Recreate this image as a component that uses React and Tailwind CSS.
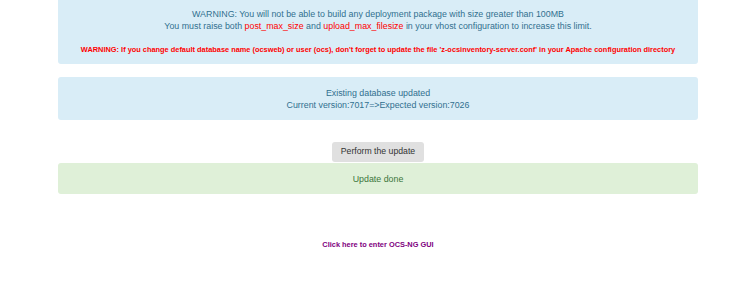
export default function App() {
  return (
    <div className="w-[750px] h-[308px] bg-white overflow-hidden" style={{ fontFamily: '"Liberation Sans", Arial, sans-serif' }}>
      <div className="ml-[58px] w-[640px]">
        <div className="bg-[#d9edf7] text-[#31708f] text-center text-[8.85px] leading-[12px] pt-[8px] pb-[8px] rounded-b-[3px]">
          <div>WARNING: You will not be able to build any deployment package with size greater than 100MB</div>
          <div>
            You must raise both <span className="text-[#ff0000]">post_max_size</span> and{" "}
            <span className="text-[#ff0000]">upload_max_filesize</span> in your vhost configuration to increase this limit.
          </div>
          <div className="h-[12px]"></div>
          <div className="text-[#ff0000] font-bold text-[7.4px] leading-[12px]">
            WARNING: If you change default database name (ocsweb) or user (ocs), don't forget to update the file 'z-ocsinventory-server.conf' in your Apache configuration directory
          </div>
        </div>
        <div className="mt-[13px] bg-[#d9edf7] text-[#31708f] text-center text-[8.85px] leading-[12px] py-[9.5px] rounded-[3px]">
          <div>Existing database updated</div>
          <div>Current version:7017=&gt;Expected version:7026</div>
        </div>
        <div className="mt-[22px] flex justify-center">
          <button className="h-[20px] px-[8.5px] bg-[#e0e0e0] text-[#333] text-[8.7px] rounded-[3px]">Perform the update</button>
        </div>
        <div className="mt-[1px] bg-[#dff0d8] text-[#3c763d] text-center text-[8.85px] leading-[12px] py-[9.5px] rounded-[3px]">
          Update done
        </div>
        <div className="mt-[36px] text-center">
          <a className="text-[#800080] font-bold text-[7.4px] leading-[12px]">Click here to enter OCS-NG GUI</a>
        </div>
      </div>
    </div>
  );
}
